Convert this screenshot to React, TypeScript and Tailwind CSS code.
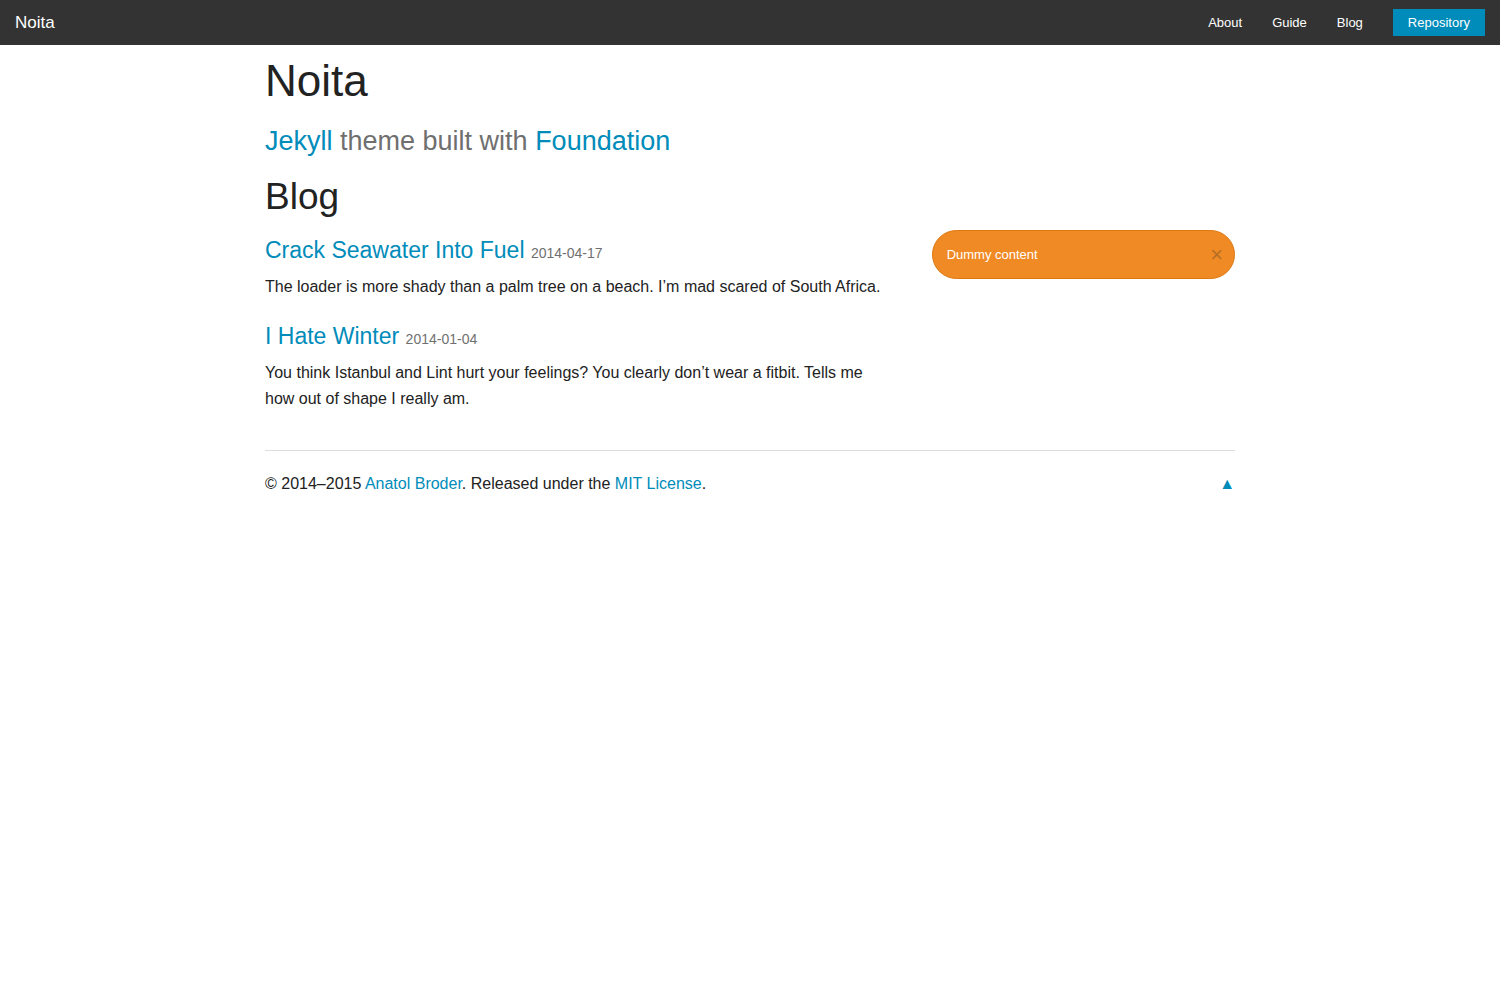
import React from "react";

const font = { fontFamily: '"Liberation Sans", Arial, sans-serif' };

export default function App() {
  return (
    <div className="min-h-screen bg-white text-[#222]" style={font}>
      <nav className="flex h-[45px] items-center justify-between bg-[#333]">
        <a href="#" className="pl-[15px] text-[17px] leading-[45px] text-white">
          Noita
        </a>
        <ul className="flex h-[45px] items-center pr-[15px] text-[13px]">
          <li className="px-[15px]">
            <a href="#" className="text-white">About</a>
          </li>
          <li className="px-[15px]">
            <a href="#" className="text-white">Guide</a>
          </li>
          <li className="px-[15px]">
            <a href="#" className="text-white">Blog</a>
          </li>
          <li className="pl-[15px]">
            <a
              href="#"
              className="flex h-[27px] items-center bg-[#008cba] px-[15px] text-white"
            >
              Repository
            </a>
          </li>
        </ul>
      </nav>

      <div className="mx-auto w-[1000px]">
        <div className="px-[15px]">
          <h1 className="mt-[5px] text-[44px] leading-[1.4]">Noita</h1>
          <h3 className="mt-[11px] text-[27px] leading-[1.4] text-[#6f6f6f]">
            <a href="#" className="text-[#008cba]">Jekyll</a> theme built with{" "}
            <a href="#" className="text-[#008cba]">Foundation</a>
          </h3>
          <h2 className="mt-[11px] text-[37px] leading-[1.4]">Blog</h2>
        </div>

        <div className="flex">
          <div className="w-[666.67px] px-[15px]">
            <h4 className="mt-[11px] text-[23px] leading-[1.4]">
              <a href="#" className="text-[#008cba]">Crack Seawater Into Fuel</a>{" "}
              <small className="text-[14px] text-[#6f6f6f]">2014-04-17</small>
            </h4>
            <p className="mt-[8px] mb-[20px] pr-[12px] text-[16px] leading-[1.6]">
              The loader is more shady than a palm tree on a beach. I’m mad scared of South Africa.
            </p>
            <h4 className="text-[23px] leading-[1.4]">
              <a href="#" className="text-[#008cba]">I Hate Winter</a>{" "}
              <small className="text-[14px] text-[#6f6f6f]">2014-01-04</small>
            </h4>
            <p className="mt-[8px] mb-[20px] pr-[12px] text-[16px] leading-[1.6]">
              You think Istanbul and Lint hurt your feelings? You clearly don’t wear a fitbit. Tells me how out of shape I really am.
            </p>
          </div>
          <div className="w-[333.33px] px-[15px]">
            <div className="relative mt-[7px] flex h-[49px] items-center rounded-full border border-[#de770f] bg-[#f08a24] pl-[14px] pr-[24px] text-[13px] text-white">
              Dummy content
              <span className="absolute right-[11px] top-[13px] text-[22px] leading-[22px] text-[#333] opacity-30">
                ×
              </span>
            </div>
          </div>
        </div>

        <div className="px-[15px]">
          <hr className="mt-[19px] border-t border-[#ddd]" />
          <div className="mt-[20px] flex items-center justify-between text-[16px] leading-[1.6]">
            <p>
              © 2014–2015 <a href="#" className="text-[#008cba]">Anatol Broder</a>. Released under the{" "}
              <a href="#" className="text-[#008cba]">MIT License</a>.
            </p>
            <a href="#" className="text-[#008cba]">▲</a>
          </div>
        </div>
      </div>
    </div>
  );
}
